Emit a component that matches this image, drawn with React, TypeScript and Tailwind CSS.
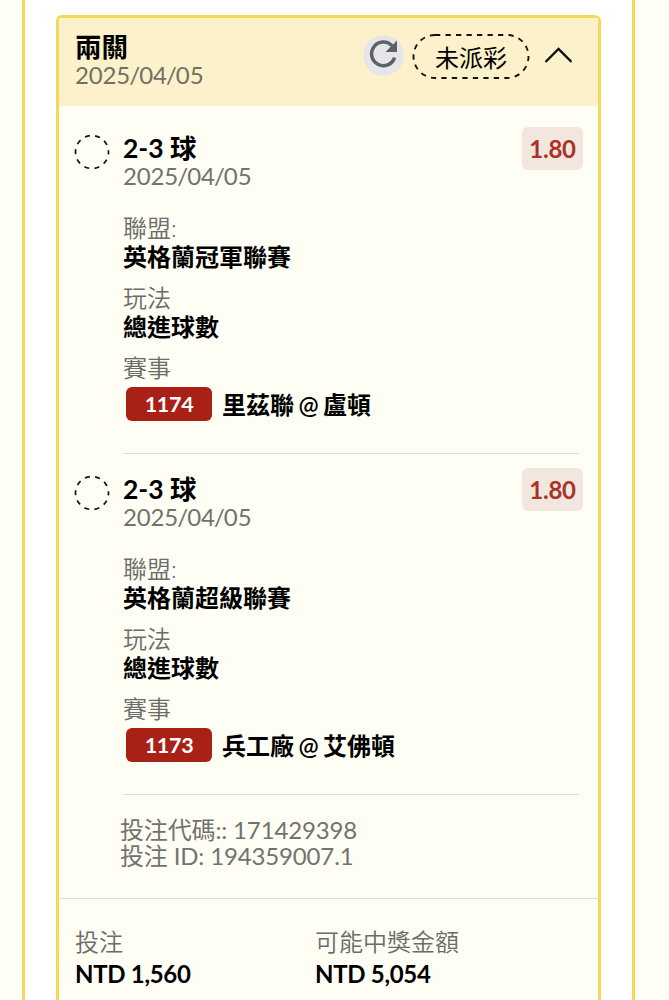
import { Fragment } from 'react';

interface Leg {
  pick: string;
  date: string;
  odds: string;
  league: string;
  market: string;
  matchNo: string;
  match: string;
}

const legs: Leg[] = [
  {
    pick: '2-3 球',
    date: '2025/04/05',
    odds: '1.80',
    league: '英格蘭冠軍聯賽',
    market: '總進球數',
    matchNo: '1174',
    match: '里茲聯 @ 盧頓',
  },
  {
    pick: '2-3 球',
    date: '2025/04/05',
    odds: '1.80',
    league: '英格蘭超級聯賽',
    market: '總進球數',
    matchNo: '1173',
    match: '兵工廠 @ 艾佛頓',
  },
];

function RefreshIcon() {
  return (
    <svg className="w-[41px] h-[41px] shrink-0" viewBox="0 0 41 41" fill="none">
      <circle cx="20.5" cy="20.5" r="20.3" fill="#e4e6ea" />
      <path d="M29 10.8 A11.8 11.8 0 1 0 31.6 22.6" stroke="#606164" strokeWidth="3.5" />
      <path d="M34 5.5 V17 H22.5 Z" fill="#606164" />
    </svg>
  );
}

function PendingIcon() {
  return (
    <svg className="w-[36px] h-[36px] shrink-0" viewBox="0 0 36 36" fill="none">
      <circle cx="18" cy="18" r="16.5" stroke="#111" strokeWidth="1.7" strokeDasharray="5 5.367" strokeDashoffset="2.5" />
    </svg>
  );
}

// slashes sit tight against the digits
function DateText({ value }: { value: string }) {
  return (
    <>
      {value.split('/').map((part, i) => (
        <Fragment key={i}>
          {i > 0 && <span className="-mx-[0.8px]">/</span>}
          {part}
        </Fragment>
      ))}
    </>
  );
}

function Field({ label, value }: { label: string; value: string }) {
  return (
    <div className="mb-[11px]">
      <div className="h-[29px] leading-[29px] font-[350] text-[#6c6c68]">{label}</div>
      <div className="h-[30px] leading-[30px] font-semibold">{value}</div>
    </div>
  );
}

function LegRow({ leg }: { leg: Leg }) {
  return (
    <div className="flex h-[341px] pl-[14px] pr-4">
      <div className="w-[49px] pt-[21px]">
        <PendingIcon />
      </div>
      <div className="mr-[3px] flex-1 border-b border-[#dcdcd7] pt-5">
        <div className="flex justify-between">
          <div>
            <div className="h-[29px] leading-[30px] text-[26.5px] font-bold">{leg.pick}</div>
            <div className="h-[29px] leading-[28px] tracking-[-0.15px] text-[#72726e]">
              <DateText value={leg.date} />
            </div>
          </div>
          <div className="-mr-[4px] -mt-[6px] flex h-[43px] w-[61px] items-center justify-center rounded-md bg-[#f3e6df] text-[24px] tracking-[-0.3px] font-bold text-[#aa3329]">
            {leg.odds}
          </div>
        </div>
        <div className="mt-[22px]">
          <Field label="聯盟:" value={leg.league} />
          <Field label="玩法" value={leg.market} />
          <div className="h-[29px] leading-[29px] font-[350] text-[#6c6c68]">賽事</div>
          <div className="mt-[4px] flex items-center">
            <span className="ml-[3px] mr-[10px] flex h-[34px] w-[86px] items-center justify-center rounded-md bg-[#a82016] text-[21.5px] tracking-[-0.3px] font-bold text-white">
              {leg.matchNo}
            </span>
            <span className="font-semibold whitespace-nowrap leading-[34px] pt-[2px] [word-spacing:-1.5px]">{leg.match}</span>
          </div>
        </div>
      </div>
    </div>
  );
}

export default function App() {
  return (
    <div className="h-[1000px] overflow-hidden bg-[#fefef5] pl-[22px] pr-[34px] font-[Lato,'Noto_Sans_CJK_TC',sans-serif] text-[24px] text-black">
      <div className="h-full border-x-[3px] border-[#f4d85c] bg-white pt-[15px] pl-[31px] pr-[31px]">
        <div className="h-[1010px] rounded-md border-[3.5px] border-[#f4d85c] bg-[#fefef5] pt-px pl-px">
          {/* Header */}
          <div className="-mt-px -ml-px flex h-[88px] bg-[#fdf1cb] pl-4 pt-[15px]">
            <div className="flex-1">
              <div className="h-[29px] leading-[29px] text-[26.5px] font-semibold">兩關</div>
              <div className="h-[28px] leading-[26px] tracking-[-0.15px] text-[#72705f]">
                <DateText value="2025/04/05" />
              </div>
            </div>
            <div className="flex h-[46px] items-center pr-[26px]">
              <div className="-mt-[2px]">
                <RefreshIcon />
              </div>
              <div className="relative ml-[8px] flex h-[46px] w-[118px] items-center justify-center">
                <svg className="absolute inset-0 h-full w-full" viewBox="0 0 118 46" fill="none">
                  <rect x="1.5" y="2" width="115" height="43" rx="21.5" stroke="#15130c" strokeWidth="1.9" strokeDasharray="5.3 5.2" />
                </svg>
                <span className="pt-[3px]">未派彩</span>
              </div>
              <svg className="ml-[14px] h-[18px] w-[28px]" viewBox="0 0 28 18" fill="none">
                <path d="M1.5 15 L14.5 2 L27.5 15" stroke="#111" strokeWidth="2.3" />
              </svg>
            </div>
          </div>

          {/* Legs */}
          <div className="pt-[7px]">
            {legs.map((leg) => (
              <LegRow key={leg.matchNo} leg={leg} />
            ))}
          </div>

          <div className="h-[104px] border-b border-[#dcdcd7] pl-[60px] pt-[22px] leading-[26px] tracking-[-0.15px] text-[#72726e]">
            <div>投注代碼:: 171429398</div>
            <div>投注 ID: 194359007.1</div>
          </div>

          {/* Stake and payout */}
          <div className="flex pl-[15px] pt-[27px]">
            <div className="w-[240px]">
              <div className="leading-[32px] font-[350] text-[#6c6c68]">投注</div>
              <div className="leading-[32px] font-bold tracking-[-0.3px]">NTD 1,560</div>
            </div>
            <div>
              <div className="leading-[32px] font-[350] text-[#6c6c68]">可能中獎金額</div>
              <div className="leading-[32px] font-bold tracking-[-0.3px]">NTD 5,054</div>
            </div>
          </div>
        </div>
      </div>
    </div>
  );
}
